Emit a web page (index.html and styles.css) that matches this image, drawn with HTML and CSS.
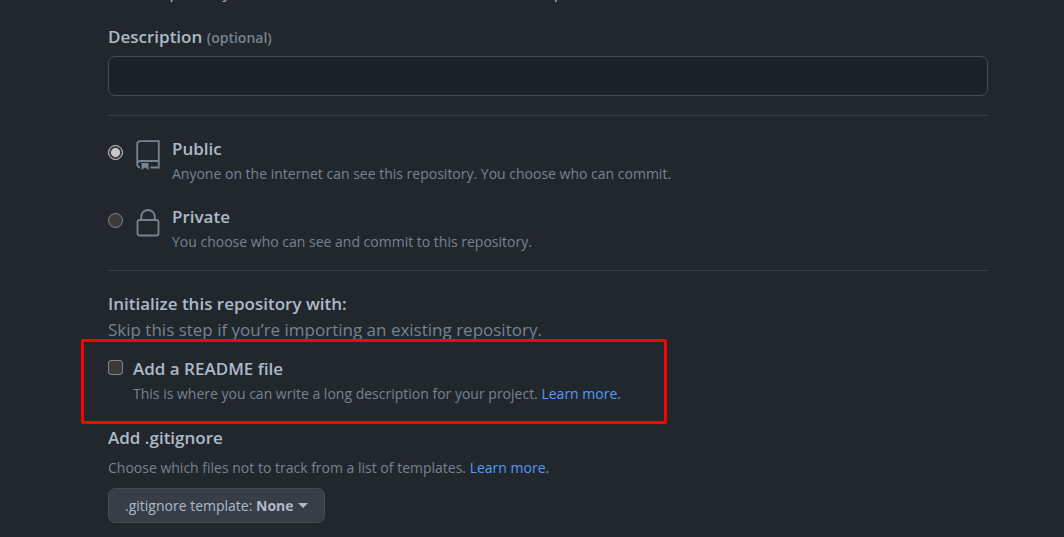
FILE: index.html
```html
<!DOCTYPE html>
<html lang="en">
<head>
<meta charset="utf-8">
<title>Create a new repository</title>
<link rel="stylesheet" href="styles.css">
</head>
<body>
<form class="page">
  <p class="hint">Great repository names are short and memorable. Need inspiration?</p>
  <section class="description">
    <label class="title" for="description">Description <span class="optional">(optional)</span></label>
    <input class="text-input" id="description" type="text">
  </section>
  <section class="visibility">
    <div class="choice">
      <input class="radio" type="radio" name="visibility" id="public" checked>
      <svg class="icon" viewBox="0 0 24 31" aria-hidden="true" fill="none" stroke="#768390" stroke-width="1.800">
        <path d="M4 27.500C2 27.500 1.200 26 1.200 24V4.500Q1.200 1.200 4.500 1.200H22.800V27.500H14.500M1.200 23.500Q1.200 21 4.500 21H22.800"/>
        <path d="M5.500 23H12.500V30L9 27.500L5.500 30Z" fill="#768390" stroke="none"/>
      </svg>
      <div class="choice-text">
        <label class="title" for="public">Public</label>
        <p class="note">Anyone on the internet can see this repository. You choose who can commit.</p>
      </div>
    </div>
    <div class="choice">
      <input class="radio" type="radio" name="visibility" id="private">
      <svg class="icon" viewBox="0 0 24 31" aria-hidden="true" fill="none" stroke="#768390" stroke-width="1.800">
        <rect x="1.500" y="12" width="21" height="15.500" rx="2"/>
        <path d="M5.300 12V8.700a6.700 6.700 0 0 1 13.400 0V12"/>
      </svg>
      <div class="choice-text">
        <label class="title" for="private">Private</label>
        <p class="note">You choose who can see and commit to this repository.</p>
      </div>
    </div>
  </section>
  <section class="initialize">
    <h2 class="title">Initialize this repository with:</h2>
    <p class="skip">Skip this step if you’re importing an existing repository.</p>
    <div class="readme">
      <input class="checkbox" type="checkbox" id="readme">
      <div class="choice-text">
        <label class="title" for="readme">Add a README file</label>
        <p class="note">This is where you can write a long description for your project. <a href="#">Learn more.</a></p>
      </div>
      <span class="highlight"></span>
    </div>
    <h3 class="title">Add .gitignore</h3>
    <p class="note ignore-note">Choose which files not to track from a list of templates. <a href="#">Learn more.</a></p>
    <button class="template" type="button"><span>.gitignore template: <b>None</b></span><span class="caret"></span></button>
  </section>
</form>
</body>
</html>
```
FILE: styles.css
```css
* { box-sizing: border-box; }
body {
  margin: 0;
  background: #22272e;
  color: #adbac7;
  font: 17px/26px "Open Sans", "Noto Sans", sans-serif;
}
.page { display: flow-root; padding: 0 76px 14px 108px; }
h2, h3, p { margin: 0; }
.title { display: block; font-size: 17px; line-height: 26px; font-weight: 600; }
.hint { margin-top: -18px; font-size: 16px; line-height: 20px; }
.description { padding: 22px 0 19px; border-bottom: 1px solid #373e47; }
.optional { color: #768390; font-size: 14px; }
.text-input {
  display: block;
  width: 100%;
  height: 40px;
  margin-top: 6px;
  padding: 6px 14px;
  border: 1px solid #444c56;
  border-radius: 7px;
  background: #1c2128;
  color: #adbac7;
  font: inherit;
}
.description .title { line-height: 25px; }
.visibility {
  display: grid;
  gap: 19px;
  padding: 20px 0 17px;
  border-bottom: 1px solid #373e47;
}
.choice { display: flex; align-items: flex-start; }
.radio, .checkbox {
  appearance: none;
  flex: none;
  width: 15px;
  height: 15px;
  margin: 9px 13px 0 0;
  border: 1px solid #858585;
  background: #3b3b3b;
}
.radio { border-radius: 50%; }
.radio:checked { border: 1px solid #d0d0d0; background: radial-gradient(circle, #c9c9c9 4px, #3b3b3b 5px); }
.icon { flex: none; width: 24px; height: 31px; margin: 4px 12px 0 0; }
.note { color: #768390; font-size: 14px; line-height: 23px; }
a { color: #539bf5; text-decoration: none; }
.initialize { padding-top: 20px; }
.skip { color: #768390; }
.readme { position: relative; display: flex; margin: 13px 0 20px; }
.checkbox { margin: 4px 10px 0 0; border-radius: 3px; }
.highlight {
  position: absolute;
  top: -17px;
  left: -27px;
  width: 586px;
  height: 85px;
  border: 3px solid #ff0000;
  border-radius: 2px;
  pointer-events: none;
}
.ignore-note { margin: 5px 0 9px; }
.template {
  display: inline-flex;
  align-items: center;
  gap: 4px;
  height: 35px;
  padding: 0 16px;
  border: 1px solid #444c56;
  border-radius: 7px;
  background: #373e47;
  color: #adbac7;
  font: 14px/24px "Open Sans", "Noto Sans", sans-serif;
}
.template b { font-weight: 700; }
.caret { border: 5px solid transparent; border-top-color: #adbac7; border-bottom: 0; }
```
